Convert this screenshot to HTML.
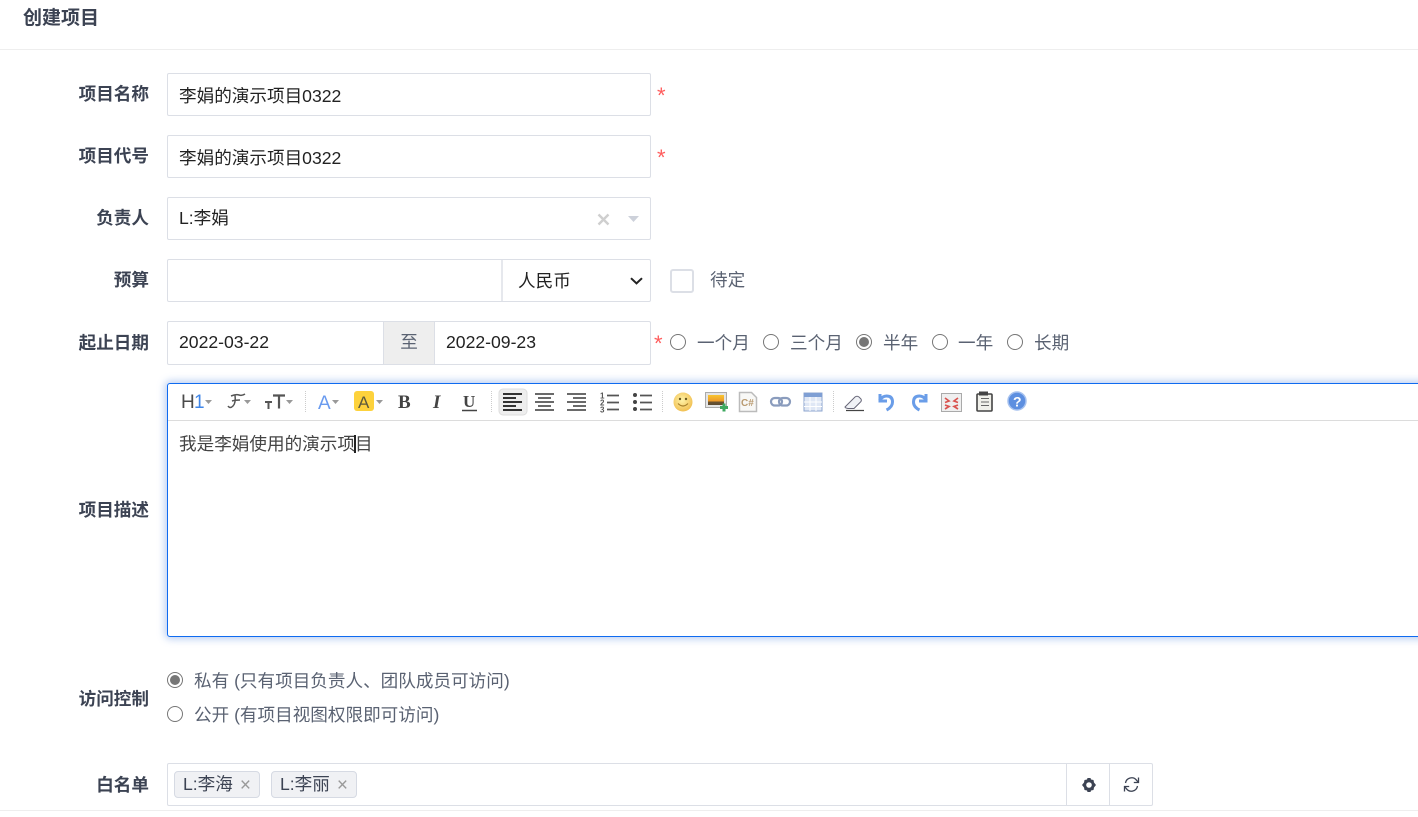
<!DOCTYPE html>
<html lang="zh-CN">
<head>
<meta charset="utf-8">
<title>创建项目</title>
<style>
html,body{margin:0;padding:0;background:#fff;}
body{position:relative;width:1418px;height:817px;overflow:hidden;font-family:"Liberation Sans","Noto Sans CJK SC",sans-serif;font-size:17.6px;color:#3c4353;}
.a{position:absolute;white-space:nowrap;}
.lbl{position:absolute;right:1269px;font-weight:700;color:#3c4353;line-height:24px;white-space:nowrap;}
.box{position:absolute;box-sizing:border-box;border:1px solid #dcdfe6;background:#fff;border-radius:2px;}
.val{position:absolute;line-height:24px;white-space:nowrap;color:#222;}
.star{position:absolute;color:#ff5d5d;line-height:24px;font-size:22px;}
.txt{position:absolute;color:#5a6272;line-height:24px;white-space:nowrap;}
.rad{position:absolute;box-sizing:border-box;width:16px;height:16px;border:1px solid #767676;border-radius:50%;background:#fff;}
.rad.on::after{content:"";position:absolute;left:2px;top:2px;width:10px;height:10px;border-radius:50%;background:#767676;}
.tag{position:absolute;box-sizing:border-box;top:771px;height:27px;border:1px solid #d6dae3;border-radius:4px;background:#f0f1f4;line-height:25px;padding-left:8px;color:#3c4353;white-space:nowrap;}
.tag i{position:absolute;right:8px;top:1px;font-style:normal;color:#999;font-size:19px;}
svg{position:absolute;overflow:visible;}
</style>
</head>
<body>
<div class="a" style="left:23px;top:7px;font-weight:700;font-size:19px;line-height:24px;color:#3c4353;">创建项目</div>
<div class="a" style="left:0;top:49px;width:1418px;height:1px;background:#eee;"></div>

<div class="lbl" style="top:82px;">项目名称</div>
<div class="box" style="left:167px;top:73px;width:484px;height:43px;"></div>
<div class="val" style="left:179px;top:84px;">李娟的演示项目0322</div>
<div class="star" style="left:657px;top:84px;">*</div>

<div class="lbl" style="top:144px;">项目代号</div>
<div class="box" style="left:167px;top:135px;width:484px;height:43px;"></div>
<div class="val" style="left:179px;top:146px;">李娟的演示项目0322</div>
<div class="star" style="left:657px;top:146px;">*</div>

<div class="lbl" style="top:206px;">负责人</div>
<div class="box" style="left:167px;top:197px;width:484px;height:43px;"></div>
<div class="val" style="left:179px;top:206px;">L:李娟</div>
<svg style="left:597px;top:213px;" width="13" height="13" viewBox="0 0 13 13"><path d="M1.500 1.500L11.500 11.500M11.500 1.500L1.500 11.500" stroke="#cfcfcf" stroke-width="2.400"/></svg>
<svg style="left:628px;top:216px;" width="11" height="6" viewBox="0 0 11 6"><path d="M0 0H11L5.500 6Z" fill="#cdd1da"/></svg>

<div class="lbl" style="top:268px;">预算</div>
<div class="box" style="left:167px;top:259px;width:484px;height:43px;"></div>
<div class="a" style="left:501px;top:260px;width:2px;height:41px;background:#e6e8ed;"></div>
<div class="val" style="left:518px;top:269px;">人民币</div>
<svg style="left:630px;top:277px;" width="13" height="8" viewBox="0 0 13 8"><path d="M1 1.200L6.500 6.400L12 1.200" fill="none" stroke="#222" stroke-width="2"/></svg>
<div class="box" style="left:670px;top:269px;width:24px;height:24px;border:2px solid #dcdfe6;border-radius:3px;"></div>
<div class="txt" style="left:710px;top:268px;">待定</div>

<div class="lbl" style="top:331px;">起止日期</div>
<div class="box" style="left:167px;top:321px;width:484px;height:44px;"></div>
<div class="a" style="left:383px;top:322px;width:52px;height:42px;box-sizing:border-box;background:#eee;border-left:1px solid #dcdfe6;border-right:1px solid #dcdfe6;text-align:center;line-height:41px;color:#5a6272;">至</div>
<div class="val" style="left:179px;top:330px;">2022-03-22</div>
<div class="val" style="left:446px;top:330px;">2022-09-23</div>
<div class="star" style="left:654px;top:332px;">*</div>
<div class="rad" style="left:670px;top:334px;"></div>
<div class="txt" style="left:697px;top:331px;">一个月</div>
<div class="rad" style="left:763px;top:334px;"></div>
<div class="txt" style="left:790px;top:331px;">三个月</div>
<div class="rad on" style="left:856px;top:334px;"></div>
<div class="txt" style="left:883px;top:331px;">半年</div>
<div class="rad" style="left:932px;top:334px;"></div>
<div class="txt" style="left:958px;top:331px;">一年</div>
<div class="rad" style="left:1007px;top:334px;"></div>
<div class="txt" style="left:1034px;top:331px;">长期</div>

<div class="lbl" style="top:498px;">项目描述</div>
<div class="a" style="left:167px;top:383px;width:1270px;height:254px;box-sizing:border-box;border:1px solid #0f6bf0;border-radius:3px;background:#fff;box-shadow:0 0 8px 2px rgba(80,130,220,.4);"></div>
<div class="a" style="left:168px;top:420px;width:1250px;height:1px;background:#dcdcdc;"></div>

<!-- toolbar -->
<svg style="left:168px;top:384px;filter:blur(.35px);" width="900" height="36" viewBox="0 0 900 36">
<defs>
<radialGradient id="sm" cx=".45" cy=".4" r=".7"><stop offset="0" stop-color="#fff3a8"/><stop offset="1" stop-color="#efb845"/></radialGradient>
<linearGradient id="im" x1="0" y1="0" x2="0" y2="1"><stop offset="0" stop-color="#f7c531"/><stop offset=".6" stop-color="#ee9a28"/><stop offset=".7" stop-color="#6b5330"/><stop offset="1" stop-color="#5a4a30"/></linearGradient>
</defs>
<text x="13" y="24" font-family="Liberation Sans" font-size="19" fill="#4a4a4a">H</text>
<text x="26" y="24" font-family="Liberation Sans" font-size="19" fill="#3f86e8">1</text>
<path d="M37 16h7l-3.500 4z" fill="#999"/>
<path d="M63 12q5-2 8-1t6-1M64 17q3-1 8-1M67 11q1 8-2 11t-5 0" fill="none" stroke="#555" stroke-width="1.500"/>
<path d="M76 16h7l-3.500 4z" fill="#999"/>
<path d="M97 18h7M100.500 18v7" stroke="#555" stroke-width="2"/>
<path d="M105 11.500h12M111 11.500v13" stroke="#555" stroke-width="2.200"/>
<path d="M118 16h7l-3.500 4z" fill="#999"/>
<path d="M137.500 7v22" stroke="#ccc" stroke-dasharray="1 1"/>
<text x="150" y="25" font-family="Liberation Sans" font-size="19" fill="#6a9bef">A</text>
<path d="M164 16h7l-3.500 4z" fill="#999"/>
<rect x="186" y="7" width="20" height="20" rx="3" fill="#fdd23c"/>
<text x="190" y="24" font-family="Liberation Sans" font-size="17" fill="#5d5a3c">A</text>
<path d="M208 16h7l-3.500 4z" fill="#999"/>
<text x="230" y="24" font-family="Liberation Serif" font-weight="700" font-size="19" fill="#444">B</text>
<text x="265" y="24" font-family="Liberation Serif" font-weight="700" font-style="italic" font-size="19" fill="#444">I</text>
<text x="295" y="23" font-family="Liberation Serif" font-weight="700" font-size="17" fill="#444">U</text>
<path d="M294 26.500h15" stroke="#444" stroke-width="1.500"/>
<path d="M323.500 7v22" stroke="#ccc" stroke-dasharray="1 1"/>
<rect x="331" y="5" width="28" height="26" rx="4" fill="#eee" stroke="#ddd"/>
<path d="M335 10h19M335 14h13M335 18h19M335 22h13M335 26h19" stroke="#333" stroke-width="2"/>
<path d="M367 10h19M370 14h13M367 18h19M370 22h13M367 26h19" stroke="#555" stroke-width="1.800"/>
<path d="M399 10h19M405 14h13M399 18h19M405 22h13M399 26h19" stroke="#555" stroke-width="1.800"/>
<text x="432" y="14.500" font-family="Liberation Sans" font-size="8" font-weight="700" fill="#555">1</text>
<text x="432" y="21.500" font-family="Liberation Sans" font-size="8" font-weight="700" fill="#555">2</text>
<text x="432" y="28.500" font-family="Liberation Sans" font-size="8" font-weight="700" fill="#555">3</text>
<path d="M439 11.500h12M439 18.500h12M439 25.500h12" stroke="#555" stroke-width="1.700"/>
<circle cx="467" cy="11" r="2" fill="#444"/><circle cx="467" cy="18" r="2" fill="#444"/><circle cx="467" cy="25" r="2" fill="#444"/>
<path d="M472 11.500h12M472 18.500h12M472 25.500h12" stroke="#555" stroke-width="1.700"/>
<path d="M494.500 7v22" stroke="#ccc" stroke-dasharray="1 1"/>
<circle cx="515" cy="18" r="9.500" fill="url(#sm)"/>
<circle cx="512" cy="15" r="1.200" fill="#6b5a20"/><circle cx="518" cy="15" r="1.200" fill="#6b5a20"/>
<path d="M510 19.500q5 5 10 0" fill="none" stroke="#a8802a" stroke-width="1.200"/>
<rect x="537.500" y="8.500" width="21" height="15" fill="#e4e4e4" stroke="#aaa"/>
<rect x="540" y="11" width="16" height="10" fill="url(#im)"/>
<path d="M552 23.500h8M556 19.500v8" stroke="#3fa860" stroke-width="3"/>
<path d="M571.500 8.500h12l5 5v14h-17z" fill="#f8f8f6" stroke="#bbb" stroke-width="1.500"/>
<text x="573" y="22" font-family="Liberation Sans" font-weight="700" font-size="10" fill="#b99a70">C#</text>
<rect x="603" y="14" width="11" height="7.500" rx="3.700" fill="none" stroke="#8a9cbd" stroke-width="2.200"/>
<rect x="611" y="14" width="11" height="7.500" rx="3.700" fill="none" stroke="#8a9cbd" stroke-width="2.200"/>
<rect x="636" y="9" width="18" height="18" fill="#dfe7f5" stroke="#8ea6cf"/>
<rect x="636" y="9" width="18" height="4" fill="#7f9fd4"/>
<path d="M642 13v14M648 13v14M636 18h18M636 22.500h18" stroke="#fff"/>
<path d="M665.500 7v22" stroke="#ccc" stroke-dasharray="1 1"/>
<path d="M677 23l10-10q2-1.500 4 0l2 2q1 2-1 3.500l-6 6h-6q-3-.5-3-1.500z" fill="#f0f2f6" stroke="#667" stroke-width="1"/>
<path d="M678 26.500h18" stroke="#444" stroke-width="1.200"/>
<path d="M712 10v7h7M711.500 16.500q3-4.500 7-4.500q6 0 6 6q0 5-6 8" fill="none" stroke="#6a9de8" stroke-width="3"/>
<path d="M758 10v7h-7M758.500 16.500q-3-4.500-7-4.500q-6 0-6 6q0 5 6 8" fill="none" stroke="#6a9de8" stroke-width="3"/>
<rect x="773.500" y="9.500" width="20" height="18" fill="#efefef" stroke="#aaa"/>
<path d="M777 14l4 3-4 1.500M790 14l-4 3 4 1.500M777 25l4-2.500-4-1.500M790 25l-4-2.500 4-1.500" fill="none" stroke="#d9534f" stroke-width="1.700"/>
<rect x="809" y="10" width="15" height="17" rx="1" fill="#f0f0ea" stroke="#444" stroke-width="1.600"/>
<rect x="811" y="7.500" width="9" height="4" fill="#444"/>
<path d="M813 14.500h8M813 18h8M813 21.500h8" stroke="#666"/>
<circle cx="849" cy="17" r="9" fill="#5d8fe0" stroke="#a5c1ef" stroke-width="1.500"/>
<text x="845" y="22.500" font-family="Liberation Sans" font-weight="700" font-size="14" fill="#fff">?</text>
</svg>

<div class="val" style="left:179px;top:432px;color:#444;">我是李娟使用的演示项目</div>
<div class="a" style="left:354px;top:435px;width:2px;height:18px;background:#222;"></div>

<div class="lbl" style="top:687px;">访问控制</div>
<div class="rad on" style="left:167px;top:672px;"></div>
<div class="txt" style="left:194px;top:669px;">私有 (只有项目负责人、团队成员可访问)</div>
<div class="rad" style="left:167px;top:706px;"></div>
<div class="txt" style="left:194px;top:703px;">公开 (有项目视图权限即可访问)</div>

<div class="lbl" style="top:773px;">白名单</div>
<div class="box" style="left:167px;top:763px;width:986px;height:43px;"></div>
<div class="a" style="left:1066px;top:764px;width:1px;height:41px;background:#dcdfe6;"></div>
<div class="a" style="left:1109px;top:764px;width:1px;height:41px;background:#dcdfe6;"></div>
<div class="tag" style="left:174px;width:86px;">L:李海<i>×</i></div>
<div class="tag" style="left:271px;width:86px;">L:李丽<i>×</i></div>
<svg style="left:1081px;top:777px;" width="16" height="16" viewBox="0 0 16 16"><path d="M1 8L3 5.500L3.500 3L6 2.500L6.500 1H9.500L10 2.500L12.500 3L13 5.500L15 8L13 10.500L12.500 13L10 13.500L9.500 15H6.500L6 13.500L3.500 13L3 10.500ZM8 5.200A2.800 2.800 0 1 0 8 10.800A2.800 2.800 0 1 0 8 5.200Z" fill="#3c4353" fill-rule="evenodd"/></svg>
<svg style="left:1123px;top:776px;" width="17" height="17" viewBox="0 0 17 17"><path d="M2.500 7A6.200 6.200 0 0 1 13.500 4.200L15 6M14.500 10A6.200 6.200 0 0 1 3.500 12.800L2 11" fill="none" stroke="#3c4353" stroke-width="1.300"/><path d="M15.500 1.500V6.500H10.800M1.500 15.500V10.500H6.200" fill="none" stroke="#3c4353" stroke-width="1.300"/></svg>

<div class="a" style="left:0;top:810px;width:1418px;height:1px;background:#eee;"></div>
</body>
</html>
